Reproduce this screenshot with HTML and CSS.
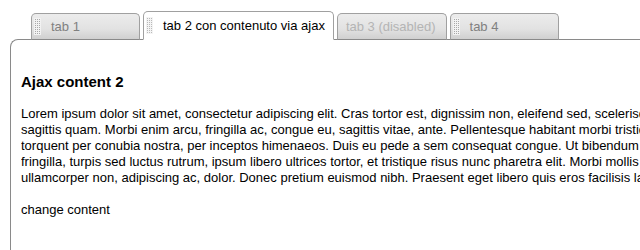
FILE: index.html
```html
<!DOCTYPE html>
<html>
<head>
<meta charset="utf-8">
<link rel="stylesheet" href="styles.css">
</head>
<body>
<div class="tabs">
  <ul class="tab-nav">
    <li class="tab"><span class="grip"></span><span class="label">tab 1</span></li>
    <li class="tab active"><span class="grip"></span><span class="label">tab 2 con contenuto via ajax</span></li>
    <li class="tab disabled"><span class="label">tab 3 (disabled)</span></li>
    <li class="tab"><span class="grip"></span><span class="label">tab 4</span></li>
  </ul>
  <div class="panel">
    <h3 class="title">Ajax content 2</h3>
    <p class="text">Lorem ipsum dolor sit amet, consectetur adipiscing elit. Cras tortor est, dignissim non, eleifend sed, scelerisque ut, lorem. Sed
sagittis quam. Morbi enim arcu, fringilla ac, congue eu, sagittis vitae, ante. Pellentesque habitant morbi tristique senectus et netus
torquent per conubia nostra, per inceptos himenaeos. Duis eu pede a sem consequat congue. Ut bibendum lorem at justo. Maecenas
fringilla, turpis sed luctus rutrum, ipsum libero ultrices tortor, et tristique risus nunc pharetra elit. Morbi mollis lectus sit amet
ullamcorper non, adipiscing ac, dolor. Donec pretium euismod nibh. Praesent eget libero quis eros facilisis lacinia.</p>
    <p class="link">change content</p>
  </div>
</div>
</body>
</html>
```
FILE: styles.css
```css
html, body {
  margin: 0;
  padding: 0;
  background: #fff;
  overflow: hidden;
}
body {
  font-family: "Liberation Sans", Arial, sans-serif;
  font-size: 13px;
  color: #000;
  width: 640px;
  height: 250px;
}
.tabs {
  padding: 11px 0 0 10px;
  width: 640px;
  box-sizing: border-box;
}
.tab-nav {
  list-style: none;
  margin: 0 0 -1px 0;
  padding: 0 0 0 21px;
  display: flex;
  align-items: flex-end;
  gap: 3px;
  position: relative;
  z-index: 1;
}
.tab {
  box-sizing: border-box;
  min-width: 109px;
  height: 27px;
  border: 1px solid #a0a0a0;
  border-bottom: 1px solid #8a8a8a;
  border-radius: 5px 5px 0 0;
  background: linear-gradient(#ececec, #e2e2e2 60%, #d0d0d0);
  display: flex;
  align-items: center;
  padding: 0 10px 0 2px;
  color: #808080;
}
.tab.active {
  height: 29px;
  background: #fff;
  border-bottom-color: #fff;
  color: #000;
  padding-right: 8px;
}
.tab.disabled {
  color: #b4b4b4;
  padding-left: 8px;
}
.grip {
  width: 7px;
  height: 17px;
  margin-right: 10px;
  background-image: linear-gradient(#f2f2f2 1px, #a8a8a8 1px);
  background-size: 2px 2px;
  position: relative;
}
.grip::before {
  content: "";
  position: absolute;
  inset: 0;
  background-image: linear-gradient(90deg, #f2f2f2 1px, transparent 1px);
  background-size: 2px 2px;
}
.tab.active .grip {
  opacity: 0.8;
}
.label {
  white-space: nowrap;
}
.panel {
  border: 1px solid #8a8a8a;
  border-right: none;
  border-bottom: none;
  border-radius: 8px 0 0 0;
  padding: 19px 0 0 10px;
  height: 211px;
  box-sizing: border-box;
  overflow: hidden;
}
.title {
  font-size: 15px;
  font-weight: bold;
  margin: 14px 0 16px;
}
.text {
  white-space: pre;
  line-height: 16px;
  margin: 0 0 16px;
  overflow: hidden;
}
.link {
  line-height: 16px;
  margin: 0;
}
```
